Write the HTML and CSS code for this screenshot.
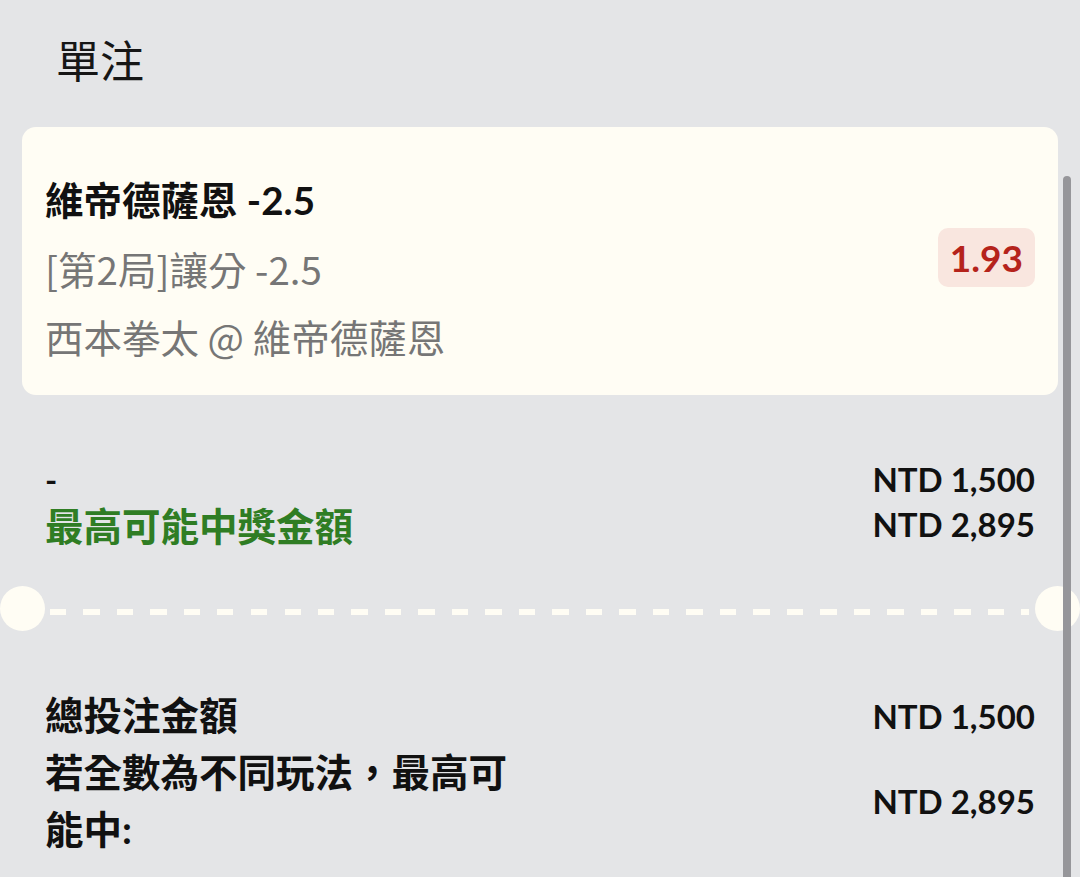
FILE: index.html
```html
<!DOCTYPE html>
<html lang="zh-Hant">
<head>
<meta charset="utf-8">
<title>單注</title>
<link rel="stylesheet" href="styles.css">
</head>
<body>
<div class="page">
  <h1 class="title">單注</h1>

  <div class="card">
    <div class="card-info">
      <div class="sel">維帝德薩恩 -2.5</div>
      <div class="sub">[第2局]讓分 -2.5</div>
      <div class="sub">西本拳太 @ 維帝德薩恩</div>
    </div>
    <div class="odds">1.93</div>
  </div>

  <div class="summary">
    <div class="sum-row">
      <div class="dash-label">-</div>
      <div class="amount">NTD 1,500</div>
    </div>
    <div class="sum-row">
      <div class="green-label">最高可能中獎金額</div>
      <div class="amount">NTD 2,895</div>
    </div>
  </div>

  <div class="divider">
    <span class="notch"></span>
    <span class="dashes"></span>
    <span class="notch"></span>
  </div>

  <div class="totals">
    <div class="tot-row">
      <div class="tot-label">總投注金額</div>
      <div class="amount">NTD 1,500</div>
    </div>
    <div class="tot-row">
      <div class="tot-label wrap">若全數為不同玩法，最高可能中:</div>
      <div class="amount">NTD 2,895</div>
    </div>
  </div>
</div>
<div class="scrollbar"></div>
</body>
</html>
```

FILE: styles.css
```css
html, body {
  margin: 0;
  padding: 0;
  overflow: hidden;
}

body {
  background: #e4e5e7;
  font-family: Lato, "Noto Sans CJK TC", sans-serif;
  color: #141414;
  width: 1080px;
  height: 877px;
  position: relative;
}

.page {
  padding: 0 22px;
}

.title {
  margin: 0;
  padding: 28px 0 0 34px;
  font-size: 44px;
  line-height: 66px;
  font-weight: 400;
  color: #161616;
}

.card {
  margin-top: 33px;
  background: #fffdf4;
  border-radius: 14px;
  padding: 39px 23px 25px 23px;
  display: flex;
  align-items: flex-start;
  justify-content: space-between;
}

.card-info {
  display: flex;
  flex-direction: column;
}

.sel {
  font-size: 38.5px;
  line-height: 68px;
  font-weight: 700;
  color: #111;
}

.sub {
  font-family: "Noto Sans CJK TC", sans-serif;
  font-size: 38.5px;
  line-height: 68px;
  font-weight: 400;
  color: #767676;
}

.odds {
  margin-top: 62px;
  background: #f9e6df;
  color: #b5231b;
  font-weight: 700;
  font-size: 37px;
  line-height: 59px;
  padding: 0 12px;
  border-radius: 10px;
}

.summary {
  margin-top: 61px;
  padding: 0 23px;
}

.sum-row {
  display: flex;
  justify-content: space-between;
  align-items: center;
  height: 45px;
}

.dash-label {
  font-size: 33px;
  font-weight: 700;
  color: #111;
}

.green-label {
  font-size: 38.5px;
  font-weight: 700;
  color: #2f7d24;
}

.amount {
  font-size: 33px;
  font-weight: 700;
  color: #111;
  white-space: nowrap;
}

.divider {
  margin: 40px -22px 0;
  display: flex;
  align-items: center;
  height: 45px;
}

.notch {
  width: 45px;
  height: 45px;
  border-radius: 50%;
  background: #fffdf4;
  flex: none;
}

.dashes {
  flex: 1;
  height: 6px;
  margin: 6px 6px 0 5px;
  background: repeating-linear-gradient(to right, #fffdf4 0 16px, transparent 16px 33.5px);
}

.totals {
  margin-top: 56px;
  padding: 0 23px;
}

.tot-row {
  display: flex;
  justify-content: space-between;
  align-items: center;
}

.tot-label {
  font-size: 38.5px;
  line-height: 57px;
  font-weight: 700;
  color: #111;
}

.tot-label.wrap {
  width: 480px;
}

.scrollbar {
  position: absolute;
  left: 1063px;
  top: 176px;
  width: 8px;
  bottom: 0;
  background: #96969a;
  border-radius: 4px 4px 0 0;
}
```
